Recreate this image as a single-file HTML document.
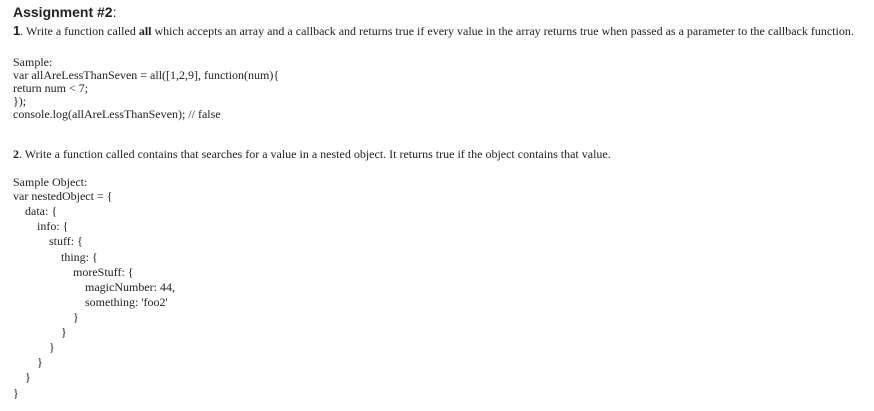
<!DOCTYPE html>
<html><head><style>
body{margin:0;width:874px;height:411px;background:#fff;color:#222;font-family:"Liberation Serif",serif;font-size:12px;position:relative;overflow:hidden}
.l{position:absolute;left:13px;white-space:pre;line-height:13px}
.h{font-family:"Liberation Sans",sans-serif;font-size:14px;font-weight:bold;top:4px;line-height:16px}
.n{font-family:"Liberation Sans",sans-serif;font-weight:bold;font-size:13px}
</style></head><body>
<div class="l h">Assignment #2<span style="font-weight:normal">:</span></div>
<div class="l" style="top:24px"><span class="n">1</span>. Write a function called <b>all</b> which accepts an array and a callback and returns true if every value in the array returns true when passed as a parameter to the callback function.</div>
<div class="l" style="top:56px">Sample:</div>
<div class="l" style="top:69px">var allAreLessThanSeven = all([1,2,9], function(num){</div>
<div class="l" style="top:82px">return num &lt; 7;</div>
<div class="l" style="top:95px">});</div>
<div class="l" style="top:108px">console.log(allAreLessThanSeven); // false</div>
<div class="l" style="top:148px"><b>2</b>. Write a function called contains that searches for a value in a nested object. It returns true if the object contains that value.</div>
<div class="l" style="top:176px">Sample Object:</div>
<div class="l" style="top:190px">var nestedObject = {</div>
<div class="l" style="top:205px;left:25px">data: {</div>
<div class="l" style="top:220px;left:37px">info: {</div>
<div class="l" style="top:235px;left:49px">stuff: {</div>
<div class="l" style="top:251px;left:61px">thing: {</div>
<div class="l" style="top:266px;left:73px">moreStuff: {</div>
<div class="l" style="top:281px;left:85px">magicNumber: 44,</div>
<div class="l" style="top:296px;left:85px">something: 'foo2'</div>
<div class="l" style="top:311px;left:73px">}</div>
<div class="l" style="top:326px;left:61px">}</div>
<div class="l" style="top:341px;left:49px">}</div>
<div class="l" style="top:356px;left:37px">}</div>
<div class="l" style="top:371px;left:25px">}</div>
<div class="l" style="top:387px">}</div>
</body></html>
